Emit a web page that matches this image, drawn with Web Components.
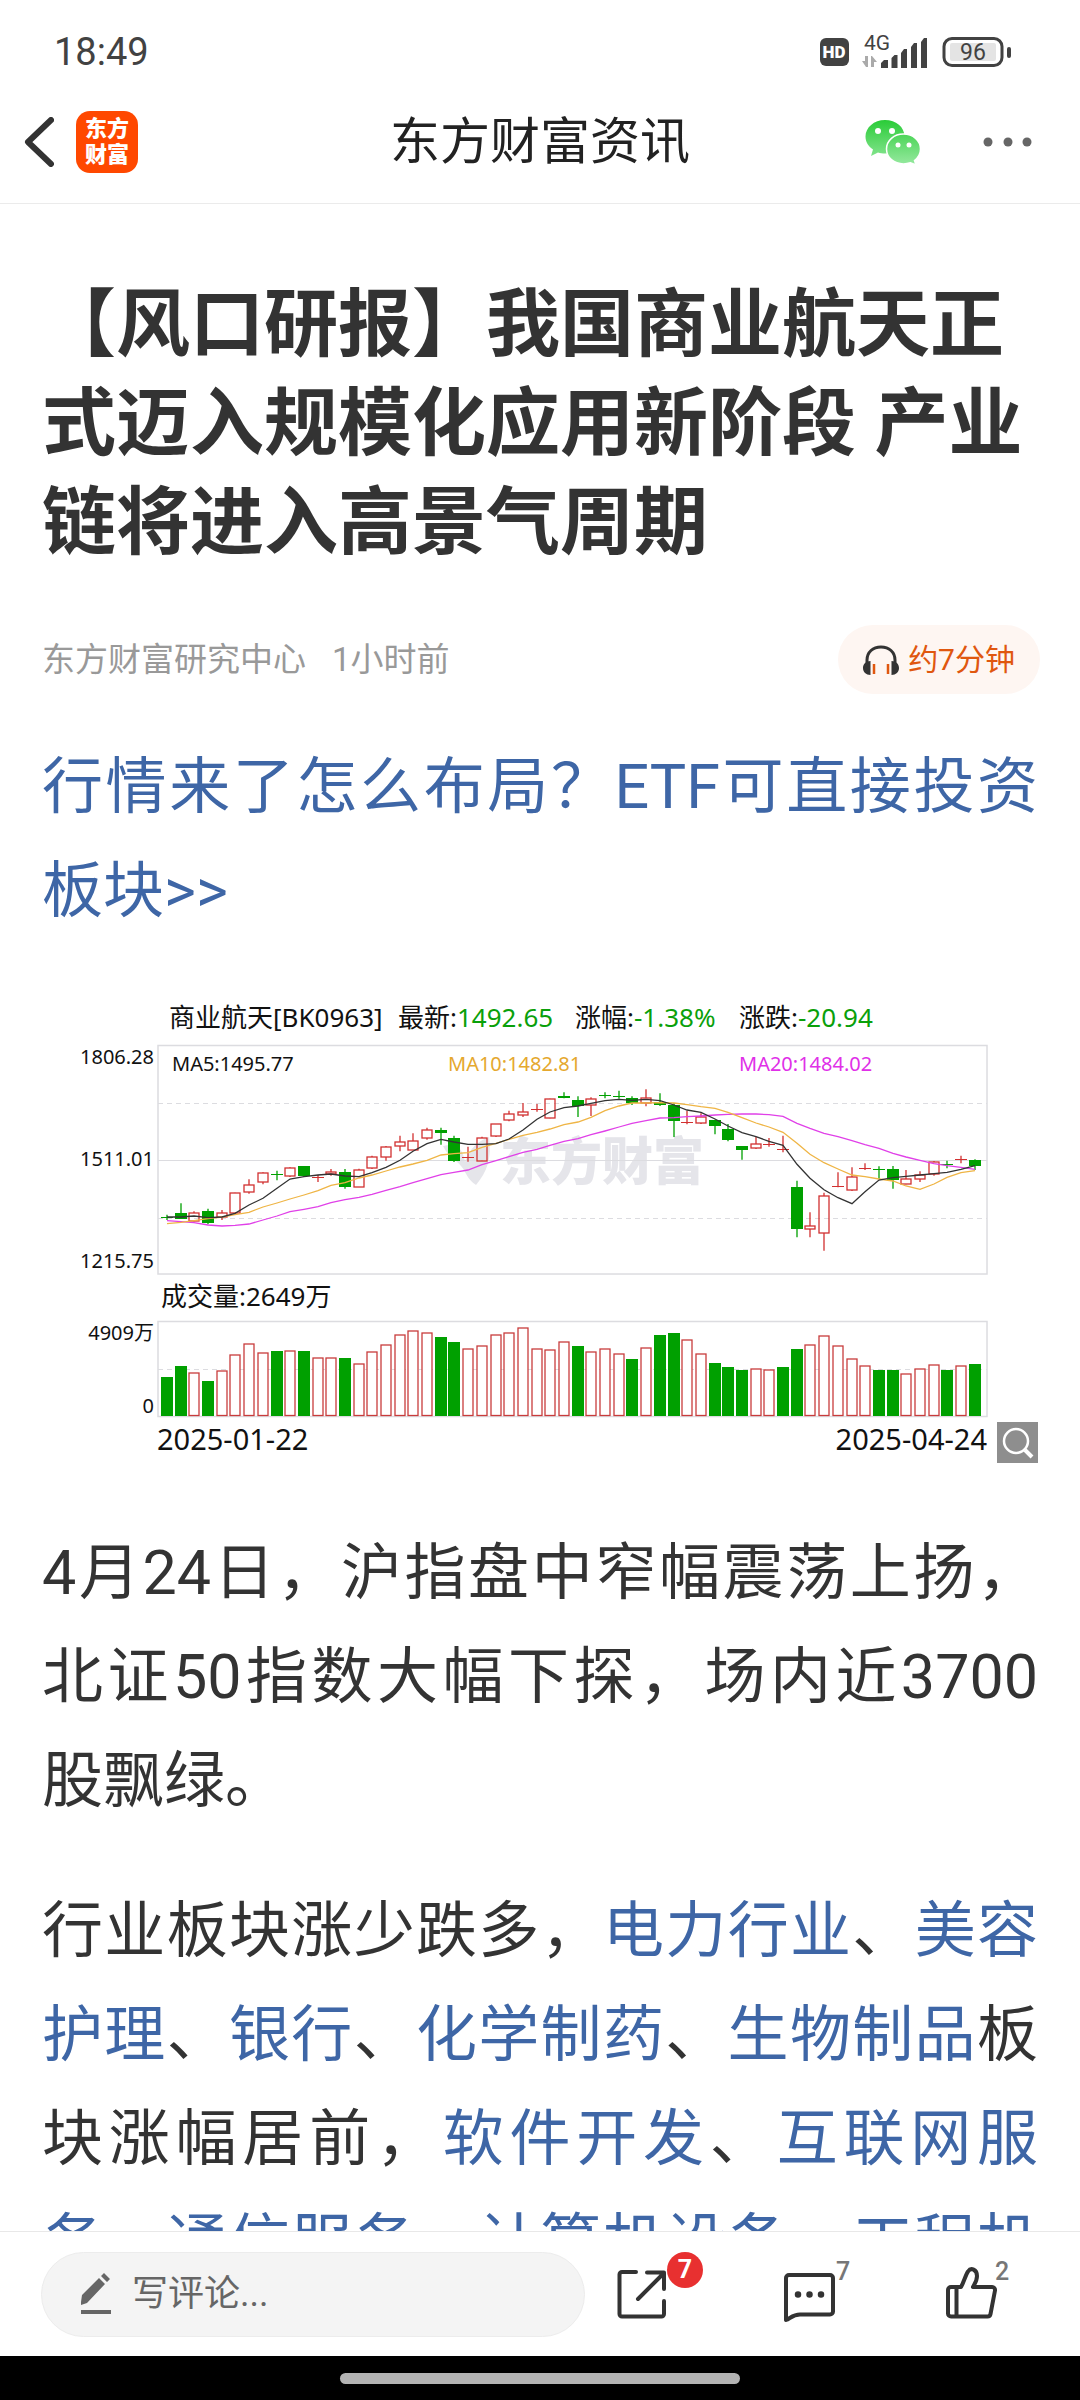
<!DOCTYPE html>
<html lang="zh-CN">
<head>
<meta charset="UTF-8">
<meta name="viewport" content="width=device-width, initial-scale=1">
<title>东方财富资讯</title>
<style>
html, body {
  height: 100%;
  margin: 0;
}
body {
  display: flex;
  flex-direction: column;
  background: #fff;
  color: #333;
  font-family: Roboto, "Noto Sans CJK SC", sans-serif;
  text-spacing-trim: space-all;
}
main {
  flex: 1;
  min-height: 0;
  overflow: hidden;
  padding: 71px 42px 0;
}
</style>
</head>
<body>
<status-bar time="18:49" battery="96"></status-bar>
<app-header>东方财富资讯</app-header>
<main>
  <article-head minutes="7">
    <span slot="title">【风口研报】我国商业航天正式迈入规模化应用新阶段 产业链将进入高景气周期</span>
    <span slot="source">东方财富研究中心</span>
    <span slot="time">1小时前</span>
  </article-head>
  <article-text><a href="#etf">行情来了怎么布局？ETF可直接投资板块&gt;&gt;</a></article-text>
  <stock-chart></stock-chart>
  <article-text>4月24日，沪指盘中窄幅震荡上扬，北证50指数大幅下探，场内近3700股飘绿。</article-text>
  <article-text>行业板块涨少跌多，<a href="#dl">电力行业</a>、<a href="#mr">美容护理</a>、<a href="#yh">银行</a>、<a href="#hx">化学制药</a>、<a href="#sw">生物制品</a>板块涨幅居前，<a href="#rj">软件开发</a>、<a href="#hl">互联网服务</a>、<a href="#tx">通信服务</a>、<a href="#js">计算机设备</a>、<a href="#gc">工程机械</a></article-text>
</main>
<comment-bar shares="7" comments="7" likes="2"></comment-bar>
<home-indicator></home-indicator>

<script>
class StatusBar extends HTMLElement {
    constructor() {
        super();
        this.attachShadow({ mode: 'open' });
    }

    connectedCallback() {
        this.shadowRoot.innerHTML = `
            <style>
:host {
  display: flex;
  align-items: center;
  height: 56px;
  padding: 24px 68px 0 54px;
  color: #424242;
}
.time {
  flex: 1;
  font-size: 38px;
}
svg {
  display: block;
}
            </style>
            <span class="time">${this.getAttribute('time')}</span>
            <svg width="193" height="40" viewBox="0 0 193 40" fill="#424242">
                <rect x="1" y="6" width="29" height="28" rx="6"/>
                <text x="15" y="26" fill="#fff" font-size="17" font-weight="900" text-anchor="middle">HD</text>
                <text x="45" y="18" font-size="21">4G</text>
                <path d="M49 24v11h-2l-4-6h3v-5zM52 35V24h1l5 6h-3v5z" fill="#aaa"/>
                <path d="M62 36v-5l3-3h4v8zM72.5 36V26l3-3h3v13zM82 36V21l3-4h3v19zM92 36V15l3-4h3v25zM102 36V10l3-4h3v30z"/>
                <rect x="125" y="6.5" width="58" height="27" rx="8" fill="none" stroke="#424242" stroke-width="3"/>
                <rect x="131" y="11" width="46" height="18" rx="2" fill="#e4e4e4"/>
                <rect x="188" y="15" width="4" height="11" rx="2"/>
                <text x="154" y="28" font-size="23" text-anchor="middle">${this.getAttribute('battery')}</text>
            </svg>
        `;
    }
}

class AppHeader extends HTMLElement {
    constructor() {
        super();
        this.attachShadow({ mode: 'open' });
    }

    connectedCallback() {
        this.shadowRoot.innerHTML = `
            <style>
:host {
  display: grid;
  grid-template-columns: 1fr auto 1fr;
  align-items: center;
  height: 123px;
  padding: 0 24px;
  border-bottom: 1px solid #ebebeb;
}
.left, .right {
  display: flex;
  align-items: center;
}
.left {
  gap: 22px;
}
.right {
  justify-content: flex-end;
  gap: 61px;
  padding-right: 24px;
}
h1 {
  margin: 0;
  font-size: 50px;
  font-weight: 400;
  line-height: 60px;
  color: #222;
}
button {
  padding: 0;
  border: 0;
  background: none;
}
svg {
  display: block;
}
.logo {
  display: grid;
  place-content: center;
  width: 62px;
  height: 62px;
  border-radius: 14px;
  background: #ff4800;
  color: #fff;
  font-size: 22px;
  font-weight: 900;
  line-height: 26px;
  text-decoration: none;
}
            </style>
            <div class="left">
                <button aria-label="返回">
                    <svg width="30" height="50" viewBox="0 0 30 50" fill="none" stroke="#333" stroke-width="6" stroke-linecap="round" stroke-linejoin="round"><path d="M27 3L4 25l23 22"/></svg>
                </button>
                <a class="logo" href="#home"><span>东方</span><span>财富</span></a>
            </div>
            <h1><slot></slot></h1>
            <div class="right">
                <button aria-label="微信">
                    <svg width="56" height="46" viewBox="0 0 56 46">
                        <defs><linearGradient id="wx" gradientUnits="userSpaceOnUse" x1="0" y1="0" x2="0" y2="46"><stop offset="0" stop-color="#27cb35"/><stop offset="1" stop-color="#97e9a0"/></linearGradient></defs>
                        <path fill="url(#wx)" d="M20 1C9 1 .5 8.5.5 17.5c0 5.5 3 10 7.5 13L6 37l7-3.5c2 .8 4.500 1 7 1 11 0 19.500-7.500 19.500-17S31 1 20 1z"/>
                        <path fill="url(#wx)" stroke="#fff" stroke-width="1.5" d="M38.5 15C29 15 21.5 21.5 21.5 30s7.5 15 17 15c2.500 0 5-.5 7-1.200L51 46l-1.500-4.500c3.500-2.700 6-6.700 6-11.500 0-8.500-7.500-15-17-15z"/>
                        <g fill="#fff"><circle cx="13" cy="12" r="3"/><circle cx="27" cy="12" r="3"/><circle cx="33" cy="26" r="2.5"/><circle cx="44" cy="26" r="2.5"/></g>
                    </svg>
                </button>
                <button aria-label="更多">
                    <svg width="50" height="12" viewBox="0 0 50 12" fill="#666"><circle cx="6" cy="6" r="4.5"/><circle cx="26" cy="6" r="4.5"/><circle cx="45" cy="6" r="4.5"/></svg>
                </button>
            </div>
        `;
    }
}

class ArticleHead extends HTMLElement {
    constructor() {
        super();
        this.attachShadow({ mode: 'open' });
    }

    connectedCallback() {
        this.shadowRoot.innerHTML = `
            <style>
:host {
  display: block;
}
h2 {
  margin: 0;
  font-size: 74px;
  font-weight: 700;
  line-height: 99px;
}
.meta {
  display: flex;
  align-items: center;
  gap: 26px;
  margin-top: 53px;
  font-size: 33px;
  line-height: 38px;
  color: #999;
}
button {
  display: flex;
  align-items: center;
  gap: 9px;
  height: 69px;
  margin-left: auto;
  margin-right: -2px;
  padding: 0 25px;
  border: 0;
  border-radius: 35px;
  background: #fef6f2;
  color: #e0570f;
  font: inherit;
  font-size: 30px;
}
            </style>
            <h2><slot name="title"></slot></h2>
            <div class="meta">
                <slot name="source"></slot>
                <slot name="time"></slot>
                <button>
                    <svg width="36" height="30" viewBox="0 0 36 30" fill="none">
                        <path d="M4 19V15C4 7 10 2 18 2s14 5 14 13v4" stroke="#333" stroke-width="3"/>
                        <path d="M7.500 16C3 16 0 19 0 23s3 7 7.500 7zM28.500 16C33 16 36 19 36 23s-3 7-7.500 7z" fill="#333"/>
                        <path d="M11 19v10M25 19v10" stroke="#e0570f" stroke-width="2.5"/>
                    </svg>
                    <span>约${this.getAttribute('minutes')}分钟</span>
                </button>
            </div>
        `;
    }
}

class ArticleText extends HTMLElement {
    constructor() {
        super();
        this.attachShadow({ mode: 'open' });
        this.shadowRoot.innerHTML = `
            <style>
:host {
  display: block;
  margin: 39px 0 44px;
  padding-top: 2px;
}
p {
  margin: 0;
  font-size: 61px;
  line-height: 104px;
  text-align: justify;
}
::slotted(a) {
  color: #3e66a6;
  text-decoration: none;
}
            </style>
            <p><slot></slot></p>
        `;
    }
}

// one row per trading day: [high, body top, body bottom, low, volume top, up]
// heights are in thirds of a chart unit, measured from the top edge
const DAYS = [
    [704,710,713,720,320,0],[670,698,715,716,288,0],[694,699,723,724,308,1],[686,694,731,733,332,0],
    [690,698,710,720,304,1],[638,640,700,701,256,1],[598,616,636,641,221,1],[577,580,608,613,248,1],
    [572,583,585,601,244,0],[562,565,589,591,244,1],[558,559,589,590,244,0],[585,591,593,606,265,1],
    [567,576,581,587,265,1],[567,576,620,626,265,0],[566,569,619,621,281,1],[527,532,565,567,245,1],
    [498,500,529,542,225,1],[467,485,496,514,194,1],[460,482,508,510,182,1],[443,449,473,479,190,1],
    [443,449,458,494,201,0],[467,473,541,546,217,0],[500,531,533,545,237,1],[470,473,541,542,229,1],
    [432,433,469,471,194,1],[392,401,418,424,190,1],[369,397,405,411,173,1],[372,386,389,395,237,1],
    [356,357,413,415,241,1],[337,349,354,355,217,0],[349,361,378,411,229,0],[352,357,376,408,245,1],
    [337,346,348,355,237,0],[332,349,351,356,253,0],[349,353,368,375,268,0],[328,354,369,379,233,1],
    [340,365,374,378,196,0],[370,374,422,471,188,0],[392,425,427,433,209,1],[400,412,429,432,253,1],
    [419,421,438,463,280,0],[432,448,482,484,292,0],[498,499,510,539,300,0],[471,492,505,507,296,1],
    [474,491,494,500,301,1],[467,506,509,517,292,1],[602,622,747,772,236,0],[697,739,747,772,225,1],
    [638,647,759,812,197,1],[577,618,621,622,229,1],[562,592,631,633,268,1],[550,563,566,570,289,1],
    [559,568,571,597,299,0],[558,568,601,626,299,0],[570,596,611,613,312,1],[574,585,596,606,296,1],
    [543,545,581,587,284,1],[542,552,554,565,299,0],[527,537,541,550,289,1],[538,539,558,570,283,0]
];
// volume bars whose colour differs from the candle above
const VOLUME_UP = { 29: 1, 32: 1, 33: 1, 45: 0 };

const MA5 = [711,711,708,713,711,700,675,655,625,597,590,585,582,588,590,578,562,541,514,491,478,486,493,493,491,477,450,418,396,383,378,370,362,358,361,358,362,375,390,397,417,438,458,470,484,496,553,595,629,653,671,635,600,593,589,585,581,577,568,557];
const MA10 = [731,727,722,716,711,704,697,681,669,657,645,632,616,608,594,585,573,561,552,541,525,521,518,502,490,478,466,457,447,434,426,412,392,378,369,369,368,369,374,380,385,397,413,429,441,457,490,523,548,567,585,590,597,603,618,628,612,592,578,572];
const MA20 = [722,725,728,735,738,736,732,720,708,695,688,680,668,659,652,643,631,620,608,596,584,577,570,554,542,530,517,508,496,484,476,464,453,441,430,422,414,413,410,408,405,403,402,402,404,409,430,445,460,470,482,494,505,520,531,541,551,557,562,568];

class StockChart extends HTMLElement {
    constructor() {
        super();
        this.attachShadow({ mode: 'open' });
    }

    connectedCallback() {
        this.render();
    }

    x(i) {
        return Math.round(125 + i * 13.69);
    }

    candles() {
        return DAYS.map(([high, top, bottom, low, , up], i) => {
            const x = this.x(i);
            const y = Math.round(top / 3);
            const h = Math.max(1, Math.round((bottom - top) / 3));
            const color = up ? '#d23030' : '#00a000';
            const wick = `<path d="M${x} ${high / 3}V${y}M${x} ${y + h}V${low / 3}" stroke="${color}" stroke-width="1.3"/>`;
            if (up && h > 1) {
                return wick + `<rect x="${x - 5}" y="${y}" width="10" height="${h}" fill="none" stroke="${color}" stroke-width="1.3"/>`;
            }
            return wick + `<rect x="${x - 6}" y="${y}" width="12" height="${h}" fill="${color}"/>`;
        }).join('');
    }

    volumes() {
        return DAYS.map((day, i) => {
            const x = this.x(i);
            const y = Math.round(290 + day[4] / 3);
            const up = i in VOLUME_UP ? VOLUME_UP[i] : day[5];
            return up
                ? `<rect x="${x - 5}" y="${y}" width="10" height="${435.5 - y}" fill="#fff" stroke="#c83c3c" stroke-width="1.3"/>`
                : `<rect x="${x - 6}" y="${y}" width="12" height="${436 - y}" fill="#00a000"/>`;
        }).join('');
    }

    average(values, color) {
        const points = values.map((v, i) => `${this.x(i)},${(v / 3).toFixed(1)}`).join(' ');
        return `<polyline points="${points}" stroke="${color}"/>`;
    }

    render() {
        this.shadowRoot.innerHTML = `
            <style>
:host {
  display: block;
  margin: 44px 0 47px;
}
figure {
  position: relative;
  margin: 0;
}
svg {
  display: block;
  width: 100%;
}
.chart {
  font-family: "Noto Sans", "Noto Sans CJK SC", sans-serif;
  font-size: 20px;
  fill: #111;
}
.big {
  font-size: 26px;
}
.date {
  font-size: 29px;
}
.down {
  fill: #0aa00a;
}
.end {
  text-anchor: end;
}
.mark {
  font-size: 51px;
  font-weight: 900;
}
button {
  position: absolute;
  right: 0;
  bottom: 9px;
  width: 41px;
  height: 41px;
  padding: 0;
  border: 0;
  background: #8e8e8e;
}
            </style>
            <figure>
                <svg class="chart" viewBox="0 7 996 485">
                    <g fill="#e5e5ea">
                        <text class="mark" x="458" y="200">东方财富</text>
                        <path d="M401 166c14-4 20 3 22 16 5-14 13-21 24-25 3 21-2 35-13 48-10-7-9-12-15-19s-12-8-18-20z"/>
                    </g>
                    <g fill="none" stroke="#dcdce0">
                        <path d="M116 180.5H945"/>
                        <path d="M116 123.5H945M116 238.5H945M116 389.5H945" stroke-dasharray="5 4"/>
                        <rect x="116" y="65.5" width="829" height="228.5" stroke-width="1.5"/>
                        <rect x="116" y="341.5" width="829" height="95" stroke-width="1.5"/>
                    </g>
                    <g>${this.volumes()}</g>
                    <g>${this.candles()}</g>
                    <g fill="none" stroke-width="1.3">
                        ${this.average(MA20, '#e040e8')}
                        ${this.average(MA10, '#efb545')}
                        ${this.average(MA5, '#333')}
                    </g>
                    <g class="big">
                        <text x="127" y="47">商业航天[BK0963]</text>
                        <text x="356" y="47">最新:<tspan class="down">1492.65</tspan></text>
                        <text x="533" y="47">涨幅:<tspan class="down">-1.38%</tspan></text>
                        <text x="697" y="47">涨跌:<tspan class="down">-20.94</tspan></text>
                        <text x="119" y="326">成交量:2649万</text>
                    </g>
                    <text x="130" y="91">MA5:1495.77</text>
                    <text x="406" y="91" fill="#e5a82e">MA10:1482.81</text>
                    <text x="697" y="91" fill="#e030e8">MA20:1484.02</text>
                    <g class="end">
                        <text x="112" y="84">1806.28</text>
                        <text x="112" y="186">1511.01</text>
                        <text x="112" y="288">1215.75</text>
                        <text x="112" y="360">4909万</text>
                        <text x="112" y="433">0</text>
                    </g>
                    <text class="date" x="115" y="470">2025-01-22</text>
                    <text class="date end" x="945" y="470">2025-04-24</text>
                </svg>
                <button aria-label="放大">
                    <svg viewBox="0 0 41 41" fill="none" stroke="#fff"><circle cx="19" cy="19" r="12" stroke-width="2.5"/><path d="M28 28l7 7" stroke-width="4"/></svg>
                </button>
            </figure>
        `;
    }
}

class CommentBar extends HTMLElement {
    constructor() {
        super();
        this.attachShadow({ mode: 'open' });
    }

    connectedCallback() {
        this.shadowRoot.innerHTML = `
            <style>
:host {
  display: flex;
  align-items: center;
  gap: 32px;
  height: 124px;
  padding: 0 83px 0 41px;
  border-top: 1px solid #e8e8e8;
  background: #fff;
}
label {
  display: flex;
  flex: 1;
  align-items: center;
  gap: 21px;
  box-sizing: border-box;
  min-width: 0;
  height: 85px;
  padding: 0 39px;
  border: 1px solid #ececec;
  border-radius: 43px;
  background: #f4f4f4;
}
input {
  flex: 1;
  min-width: 0;
  height: 48px;
  padding: 0;
  border: 0;
  background: none;
  font: inherit;
  font-size: 36px;
  line-height: 48px;
}
input::placeholder {
  color: #666;
  opacity: 1;
}
.actions {
  display: flex;
  gap: 115px;
}
button {
  position: relative;
  width: 50px;
  height: 56px;
  padding: 0;
  border: 0;
  background: none;
  font-family: inherit;
}
svg {
  display: block;
  overflow: visible;
}
button svg {
  fill: none;
  stroke: #333;
  stroke-width: 4;
  stroke-linecap: round;
  stroke-linejoin: round;
}
.count, .badge {
  position: absolute;
  left: 100%;
}
.count {
  top: -8px;
  margin-left: -2px;
  color: #777;
  font-size: 25px;
  font-weight: 500;
  line-height: 28px;
}
.comments {
  margin-left: 4px;
}
.badge {
  top: -14px;
  width: 36px;
  border-radius: 18px;
  background: #e83030;
  color: #fff;
  font-size: 25px;
  font-weight: 700;
  line-height: 36px;
  text-align: center;
}
            </style>
            <label>
                <svg width="30" height="42" viewBox="0 0 30 42" fill="#666"><path d="M0 29l1-7L18 5l6 6L6 30l-6 2zM20 3l3-3 6 6-3 3zM0 37h30v4H0z"/></svg>
                <input type="text" placeholder="写评论..." aria-label="写评论">
            </label>
            <div class="actions">
                <button aria-label="分享">
                    <svg width="50" height="56" viewBox="0 0 50 56"><path d="M19 6H5a2.5 2.5 0 0 0-2.5 2.5V48A2.5 2.5 0 0 0 5 50.5H44.5A2.5 2.5 0 0 0 47 48V35M30 6.5H47V23M46 8L21 33"/></svg>
                    <span class="badge">${this.getAttribute('shares')}</span>
                </button>
                <button aria-label="评论">
                    <svg width="50" height="56" viewBox="0 0 50 56"><path d="M4 54V12a3 3 0 0 1 3-3H48a3 3 0 0 1 3 3V45.5a3 3 0 0 1-3 3H18C11 48.5 8 52.5 4 54z"/><path stroke-width="6.5" d="M16 28.5h.01M27.5 28.5h.01M39 28.5h.01"/></svg>
                    <span class="count comments">${this.getAttribute('comments')}</span>
                </button>
                <button aria-label="点赞">
                    <svg width="50" height="56" viewBox="0 0 50 56"><path d="M1 24a3 3 0 0 1 3-3H14C17 16 18.5 9 21 5.5 24 1 30 3.5 30 10 30 15 27.5 18 26 21H45a3 3 0 0 1 3 3.5L43.5 48a3 3 0 0 1-3 2.5H4a3 3 0 0 1-3-3zM9.5 21V50.5"/></svg>
                    <span class="count">${this.getAttribute('likes')}</span>
                </button>
            </div>
        `;
    }
}

class HomeIndicator extends HTMLElement {
    constructor() {
        super();
        this.attachShadow({ mode: 'open' });
        this.shadowRoot.innerHTML = `
            <style>
:host {
  display: flex;
  justify-content: center;
  height: 27px;
  padding-top: 17px;
  background: #000;
}
span {
  width: 37%;
  height: 11px;
  border-radius: 6px;
  background: #b3b3b3;
}
            </style>
            <span></span>
        `;
    }
}

customElements.define('status-bar', StatusBar);
customElements.define('app-header', AppHeader);
customElements.define('article-head', ArticleHead);
customElements.define('article-text', ArticleText);
customElements.define('stock-chart', StockChart);
customElements.define('comment-bar', CommentBar);
customElements.define('home-indicator', HomeIndicator);
</script>
</body>
</html>
